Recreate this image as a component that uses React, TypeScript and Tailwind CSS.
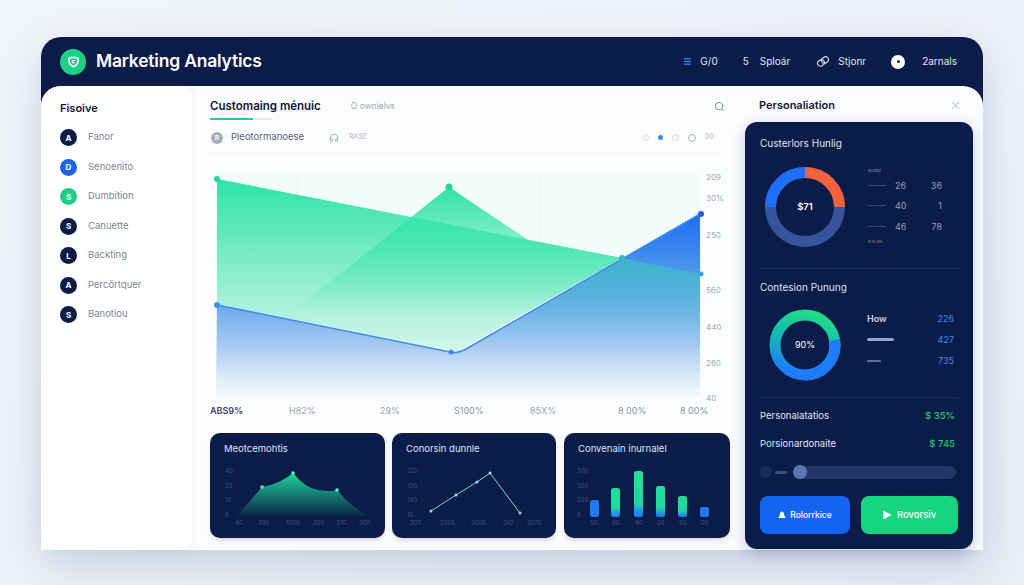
import React from 'react';
import { Search, X, Menu, Headphones } from 'lucide-react';

const FONT = "font-['Inter','Noto_Sans',sans-serif]";

const sideItems = [
  { letter: 'A', label: 'Fanor', color: 'bg-[#0c1c49]' },
  { letter: 'D', label: 'Senoenito', color: 'bg-[#1d62e8]' },
  { letter: 'S', label: 'Dumbition', color: 'bg-[#1fcf85]' },
  { letter: 'S', label: 'Canuette', color: 'bg-[#0c1c49]' },
  { letter: 'L', label: 'Backting', color: 'bg-[#0c1c49]' },
  { letter: 'A', label: 'Percörtquer', color: 'bg-[#0c1c49]' },
  { letter: 'S', label: 'Banotiou', color: 'bg-[#0c1c49]' },
];

const xLabels = [
  { text: 'ABS9%', width: 'w-[79px]', color: 'text-[#3b4560] font-semibold' },
  { text: 'H82%', width: 'w-[91px]', color: 'text-[#9aa3b2]' },
  { text: '29%', width: 'w-[74px]', color: 'text-[#9aa3b2]' },
  { text: 'S100%', width: 'w-[76px]', color: 'text-[#8b94a5]' },
  { text: '85X%', width: 'w-[88px]', color: 'text-[#9aa3b2]' },
  { text: '8 00%', width: 'w-[62px]', color: 'text-[#8b94a5]' },
  { text: '8 00%', width: 'w-[40px]', color: 'text-[#8b94a5]' },
];

const yLabels: [number, string][] = [
  [3, '209'], [24, '30%'], [61, '250'], [116, '560'], [153, '440'], [189, '260'], [224, '40'],
];

const MainChart = () => (
  <svg width="520" height="225" viewBox="0 0 520 225" className="overflow-visible">
    <defs>
      <linearGradient id="blueFill" gradientUnits="userSpaceOnUse" x1="0" y1="40" x2="0" y2="225">
        <stop offset="0" stopColor="#1f6ef5" />
        <stop offset="0.3" stopColor="#4a96ec" />
        <stop offset="0.5" stopColor="#6fa9ee" />
        <stop offset="0.7" stopColor="#a4c8f2" />
        <stop offset="0.86" stopColor="#d6e6f8" />
        <stop offset="1" stopColor="#fafcff" />
      </linearGradient>
      <linearGradient id="greenFill" gradientUnits="userSpaceOnUse" x1="0" y1="5" x2="0" y2="180">
        <stop offset="0" stopColor="#2fe3a8" />
        <stop offset="1" stopColor="#d8f6ee" />
      </linearGradient>
      <linearGradient id="peakFill" gradientUnits="userSpaceOnUse" x1="0" y1="13" x2="0" y2="140">
        <stop offset="0" stopColor="#2fe3a8" />
        <stop offset="1" stopColor="#2fe3a8" stopOpacity="0" />
      </linearGradient>
      <linearGradient id="tealFill" gradientUnits="userSpaceOnUse" x1="0" y1="84" x2="0" y2="170">
        <stop offset="0" stopColor="#3fd6b0" stopOpacity="0.5" />
        <stop offset="1" stopColor="#3fd6b0" stopOpacity="0" />
      </linearGradient>
    </defs>
    <rect x="0" y="0" width="484" height="225" fill="#f2fdf9" />
    {[81, 162, 243, 324, 405].map((x) => (
      <line key={x} x1={x} y1="0" x2={x} y2="225" stroke="#e6f2ee" strokeWidth="0.5" />
    ))}
    <path d="M1 131 L234 178 Q241 180 250 175 L484 40 L484 225 L0 225 Z" fill="url(#blueFill)" />
    <path d="M1 5 L406 84 L240 178 L1 131 Z" fill="url(#greenFill)" />
    <path d="M406 84 L484 100 L484 170 L259 170 Z" fill="url(#tealFill)" />
    <path d="M80 135 L233 13 L312 66 L406 84 L240 178 Z" fill="url(#peakFill)" />
    <path d="M1 131 L234 178 Q241 180 250 175 L484 40" fill="none" stroke="#3f8bea" strokeWidth="1.5" />
    <circle cx="1" cy="5" r="3" fill="#25d69a" />
    <circle cx="233" cy="13" r="3.5" fill="#25d69a" />
    <circle cx="406" cy="84" r="3" fill="#35b8c0" />
    <circle cx="485" cy="100" r="2.5" fill="#38a8e0" />
    <circle cx="1" cy="131" r="3" fill="#3a90e8" />
    <circle cx="235" cy="178" r="2.5" fill="#3a88ea" />
    <circle cx="485" cy="40" r="3" fill="#1d62e8" />
    {yLabels.map(([y, t]) => (
      <text key={t} x="490" y={y + 3} fontSize="8" fill="#a4acba">{t}</text>
    ))}
  </svg>
);

const DarkCard = ({ title, width, children }: { title: string; width: string; children: React.ReactNode }) => (
  <div className={`${width} h-[105px] bg-[#0c1c49] rounded-[10px] flex flex-col overflow-hidden shadow-md`}>
    <div className="h-[33px] px-[14px] flex items-center text-[9.5px] text-[#dfe6f4]">{title}</div>
    {children}
  </div>
);

const axisText = { fontSize: 6, fill: '#3f5288' };

const MiniArea = () => (
  <svg viewBox="0 0 175 72" className="w-[175px] h-[72px]">
    <defs>
      <linearGradient id="miniGreen" x1="0" y1="0" x2="0" y2="1">
        <stop offset="0" stopColor="#1fd694" />
        <stop offset="1" stopColor="#1fd694" stopOpacity="0.05" />
      </linearGradient>
    </defs>
    <path d="M27 50 L52 21 Q70 18 83 7 Q95 22 108 24 Q120 26 127 24 Q140 40 158 50 Z" fill="url(#miniGreen)" />
    <circle cx="52" cy="21" r="1.8" fill="#5cf0c0" />
    <circle cx="83" cy="7" r="1.8" fill="#5cf0c0" />
    <circle cx="127" cy="24" r="1.8" fill="#5cf0c0" />
    {[[5, '40'], [20, '20'], [34, '10'], [49, '0']].map(([y, t]) => (
      <text key={t} x="15" y={Number(y) + 2} {...axisText}>{t}</text>
    ))}
    {[[25, '40'], [48, '390'], [76, '1000'], [103, '300'], [126, '370'], [149, '360']].map(([x, t]) => (
      <text key={t} x={x} y="59" {...axisText}>{t}</text>
    ))}
  </svg>
);

const MiniLine = () => (
  <svg viewBox="0 0 164 72" className="w-[164px] h-[72px]">
    <polyline points="39,45 64,29 85,16 98,7 128,47" fill="none" stroke="#6fd6e0" strokeWidth="1" />
    {[[39, 45], [64, 29], [85, 16], [98, 7], [128, 47]].map(([x, y]) => (
      <circle key={x} cx={x} cy={y} r="1.5" fill="#8be6ec" />
    ))}
    {[[5, '120'], [20, '100'], [34, '140'], [49, '10']].map(([y, t]) => (
      <text key={t} x="15" y={Number(y) + 2} {...axisText}>{t}</text>
    ))}
    {[[18, '305'], [48, '2005'], [79, '3000'], [111, '310'], [135, '3070']].map(([x, t]) => (
      <text key={t} x={x} y="59" {...axisText}>{t}</text>
    ))}
  </svg>
);

const bars = [
  { x: 26, top: 34, fill: '#1f7cf0' },
  { x: 47, top: 22, fill: 'url(#barMix)' },
  { x: 70, top: 5, fill: 'url(#barMix)' },
  { x: 92, top: 20, fill: 'url(#barMix)' },
  { x: 114, top: 30, fill: 'url(#barMix)' },
  { x: 136, top: 41, fill: '#1f7cf0' },
];

const MiniBars = () => (
  <svg viewBox="0 0 166 72" className="w-[166px] h-[72px]">
    <defs>
      <linearGradient id="barMix" x1="0" y1="0" x2="0" y2="1">
        <stop offset="0" stopColor="#1ee09a" />
        <stop offset="0.7" stopColor="#1ed9a0" />
        <stop offset="0.9" stopColor="#1f8cf0" />
        <stop offset="1" stopColor="#1f7cf0" />
      </linearGradient>
    </defs>
    {bars.map((b) => (
      <rect key={b.x} x={b.x} y={b.top} width="9" height={51 - b.top} rx="2.5" fill={b.fill} />
    ))}
    {[[5, '500'], [20, '300'], [34, '200'], [49, '0']].map(([y, t]) => (
      <text key={t} x="13" y={Number(y) + 2} {...axisText}>{t}</text>
    ))}
    {[[26, '50'], [48, '00'], [71, '90'], [93, '00'], [115, '90'], [137, '00']].map(([x, t], i) => (
      <text key={i} x={x} y="59" {...axisText}>{t}</text>
    ))}
  </svg>
);

const RingOne = () => (
  <svg width="80" height="80" viewBox="0 0 80 80" className="shrink-0">
    <circle cx="40" cy="40" r="34.5" fill="none" stroke="#35549c" strokeWidth="11" />
    <path d="M40 5.5 A34.5 34.5 0 0 1 74.5 40" fill="none" stroke="#f4623a" strokeWidth="11" />
    <path d="M5.5 40 A34.5 34.5 0 0 1 40 5.5" fill="none" stroke="#1f6ffb" strokeWidth="11" />
  </svg>
);

const RingTwo = () => (
  <svg width="72" height="72" viewBox="0 0 72 72" className="shrink-0">
    <defs>
      <linearGradient id="ringMix" x1="0.7" y1="0" x2="0.4" y2="1">
        <stop offset="0" stopColor="#20dc88" />
        <stop offset="0.5" stopColor="#12b8b8" />
        <stop offset="1" stopColor="#1f7cf8" />
      </linearGradient>
    </defs>
    <circle cx="36" cy="36" r="30" fill="none" stroke="url(#ringMix)" strokeWidth="11" />
    <path d="M65.5 31 A30 30 0 0 1 36 66" fill="none" stroke="#1f7cf8" strokeWidth="11" />
  </svg>
);

export default function App() {
  return (
    <div className={`${FONT} w-[1024px] h-[585px] overflow-hidden bg-gradient-to-br from-[#f2f5fa] to-[#e8edf6] pt-[37px] pl-[41px]`}>
      <div className="w-[942px] h-[513px] rounded-[20px] bg-[#0c1c49] flex flex-col shadow-[0_14px_40px_rgba(60,85,140,0.22)]">
        {/* top bar */}
        <header className="h-[49px] shrink-0 flex items-center pl-[19px] pr-[26px] text-[10px] text-[#dfe7f5]">
          <div className="w-[26px] h-[26px] rounded-full bg-[#1fcf85] flex items-center justify-center">
            <svg width="13" height="13" viewBox="0 0 12 12" fill="none" stroke="#fff" strokeWidth="1.6">
              <path d="M1.8 3 Q6 1.2 10.2 3 V6 Q10 9 6 10.8 Q2 9 1.8 6 Z" />
              <path d="M7.5 5 H5 V7 H7" strokeWidth="1" />
            </svg>
          </div>
          <h1 className="ml-[10px] text-[17.5px] font-semibold text-white tracking-[-0.2px]">Marketing Analytics</h1>
          <div className="ml-auto flex items-center">
            <Menu size={9} className="text-[#3d8ff0]" strokeWidth={3} />
            <span className="ml-[8px]">G/0</span>
            <span className="ml-[25px] text-[10px]">5</span>
            <span className="ml-[11px]">Sploár</span>
            <svg width="14" height="13" viewBox="0 0 14 13" fill="none" stroke="#dfe7f5" strokeWidth="1.1" className="ml-[26px]">
              <ellipse cx="5" cy="8" rx="3.6" ry="3" transform="rotate(-30 5 8)" />
              <ellipse cx="9" cy="5" rx="3.6" ry="3" transform="rotate(-30 9 5)" />
            </svg>
            <span className="ml-[8px]">Stjonr</span>
            <div className="ml-[25px] w-[14px] h-[14px] rounded-full bg-white flex items-center justify-center">
              <div className="w-[3px] h-[3px] rounded-full bg-[#0c1c49]" />
            </div>
            <span className="ml-[17px]">2arnals</span>
          </div>
        </header>

        <div className="flex-1 min-h-0 flex bg-[#fbfcfe] rounded-t-[20px]">
          {/* sidebar */}
          <aside className="w-[151px] shrink-0 bg-white rounded-tl-[20px] rounded-r-[12px] rounded-bl-[20px] pl-[19px] pt-[15px] shadow-[2px_0_8px_rgba(120,140,180,0.07)]">
            <div className="h-[14px] flex items-center text-[11px] font-semibold text-[#0f1a35]">Fisoive</div>
            <ul className="mt-[14px] flex flex-col gap-[12.5px]">
              {sideItems.map((item) => (
                <li key={item.label} className="h-[17px] flex items-center">
                  <span className={`${item.color} w-[17px] h-[17px] rounded-full flex items-center justify-center text-[8px] font-bold text-white`}>{item.letter}</span>
                  <span className="ml-[11px] text-[9.5px] text-[#7c8696]">{item.label}</span>
                </li>
              ))}
            </ul>
          </aside>

          {/* main column */}
          <main className="w-[553px] shrink-0 pl-[18px] flex flex-col">
            <div className="h-[36px] pr-[20px] flex items-start pt-[13px]">
              <div>
                <div className="text-[11.5px] leading-[14px] font-semibold text-[#0f1a35]">Customaing ménuic</div>
                <div className="mt-[5px] w-[62px] h-[2px] bg-[#e4e8ee]">
                  <div className="w-[43px] h-[2px] bg-[#1fcf95]" />
                </div>
              </div>
              <span className="ml-[30px] text-[8.5px] leading-[14px] text-[#a0a8b5]">O ownielvs</span>
              <Search size={11} className="ml-auto mt-[2px] text-[#7d8592]" />
            </div>

            <div className="h-[32px] mr-[24px] flex items-center border-b border-[#f0f2f6]">
              <span className="ml-[1px] w-[12px] h-[12px] rounded-full bg-[#a9afba] flex items-center justify-center text-[6px] font-bold text-white">R</span>
              <span className="ml-[8px] text-[9.5px] text-[#596273]">Pleotormanoese</span>
              <Headphones size={10} className="ml-[25px] text-[#9aa1ad]" />
              <span className="ml-[10px] text-[7px] text-[#b3b9c4]">RASE</span>
              <div className="ml-auto mr-[2px] flex items-center gap-[9px]">
                <span className="w-[6px] h-[6px] rounded-full border border-[#dfe3ea]" />
                <span className="w-[5px] h-[5px] rounded-full bg-[#2d8be0]" />
                <span className="w-[7px] h-[7px] rounded-full border border-[#d5d9e0]" />
                <span className="w-[8px] h-[8px] rounded-full border border-[#aab1bc]" />
                <span className="w-[14px] text-[7px] text-[#b3b9c4]">00</span>
              </div>
            </div>

            <div className="mt-[20px] pl-[6px]">
              <MainChart />
            </div>

            <div className="mt-[6px] h-[12px] flex items-center text-[9px]">
              {xLabels.map((l, i) => (
                <span key={i} className={`${l.width} shrink-0 ${l.color}`}>{l.text}</span>
              ))}
            </div>

            <div className="mt-[16px] flex">
              <DarkCard title="Meotcemohtis" width="w-[175px]"><MiniArea /></DarkCard>
              <div className="w-[7px]" />
              <DarkCard title="Conorsin dunnle" width="w-[164px]"><MiniLine /></DarkCard>
              <div className="w-[8px]" />
              <DarkCard title="Convenain inurnalel" width="w-[166px]"><MiniBars /></DarkCard>
            </div>
          </main>

          {/* right panel */}
          <section className="w-[238px] shrink-0 flex flex-col">
            <div className="h-[36px] pl-[14px] pr-[21px] pt-[2px] flex items-center justify-between">
              <span className="text-[11px] font-semibold text-[#0f1a35]">Personaliation</span>
              <X size={13} className="text-[#c3c8d2]" />
            </div>
            <div className="w-[228px] h-[427px] bg-[#0c1c49] rounded-[12px] px-[15px] text-[#dfe6f4] shadow-[0_4px_14px_rgba(30,50,100,0.25)]">
              <div className="h-[42px] flex items-center text-[10px]">Custerlors Hunlig</div>

              <div className="relative flex h-[105px] border-b border-[#1a2d63] items-start pt-[3px]">
                <div className="ml-[5px] relative">
                  <RingOne />
                  <div className="absolute inset-0 flex items-center justify-center text-[9.5px] font-semibold text-white">$71</div>
                </div>
                <div className="ml-[23px] flex-1 pr-[16px] text-[9px] text-[#8f9fc4]">
                  <div className="h-[8px] text-[4px] leading-[8px] text-[#8f9fc4]">Ibcdiyt</div>
                  {[['26', '36'], ['40', '1'], ['46', '78']].map(([a, b]) => (
                    <div key={a} className="h-[20.5px] flex items-center">
                      <span className="w-[18px] h-[1px] bg-[#34497f]" />
                      <span className="ml-[9px]">{a}</span>
                      <span className="ml-auto">{b}</span>
                    </div>
                  ))}
                  <div className="h-[10px] text-[4px] leading-[10px] text-[#b0916f]">Ill III ust</div>
                </div>
              </div>

              <div className="h-[36px] flex items-center text-[10px]">Contesion Punung</div>

              <div className="relative h-[93px] flex items-start border-b border-[#1a2d63] pt-[4px]">
                <div className="ml-[9px] relative">
                  <RingTwo />
                  <div className="absolute inset-0 flex items-center justify-center text-[9px] text-white">90%</div>
                </div>
                <div className="ml-[26px] flex-1 pr-[4px] -mt-[1px] text-[9px]">
                  <div className="h-[21px] flex items-center justify-between">
                    <span className="font-semibold text-[#cdd6ea]">How</span>
                    <span className="text-[#3f8ef0]">226</span>
                  </div>
                  <div className="h-[21px] flex items-center justify-between">
                    <span className="w-[27px] h-[3px] rounded-full bg-[#8ea7d6]" />
                    <span className="text-[#3f8ef0]">427</span>
                  </div>
                  <div className="h-[21px] flex items-center justify-between">
                    <span className="w-[14px] h-[2px] rounded-full bg-[#5a70a6]" />
                    <span className="text-[#3f8ef0]">735</span>
                  </div>
                </div>
              </div>

              <div className="h-[36px] pr-[3px] flex items-center justify-between text-[9.5px]">
                <span>Personalatatios</span>
                <span className="text-[#22c66e] font-medium">$ 35%</span>
              </div>
              <div className="h-[20px] pr-[3px] flex items-center justify-between text-[9.5px]">
                <span>Porsionardonaite</span>
                <span className="text-[#22c66e] font-medium">$ 745</span>
              </div>

              <div className="mt-[11px] mr-[2px] h-[14px] flex items-center">
                <span className="w-[12px] h-[12px] rounded-full bg-[#1a2b5c]" />
                <span className="ml-[3px] w-[12px] h-[3px] rounded-full bg-[#3b4f85]" />
                <span className="ml-[6px] w-[14px] h-[14px] rounded-full bg-[#5d75ad] relative z-10" />
                <span className="flex-1 -ml-[7px] h-[13px] rounded-r-full bg-[#233669]" />
              </div>

              <div className="mt-[17px] flex gap-[11px]">
                <button className="w-[90px] h-[38px] rounded-[8px] bg-[#1565f5] flex items-center justify-center gap-[4px] text-[8.5px] font-medium text-white">
                  <svg width="8" height="9" viewBox="0 0 8 9" fill="#fff">
                    <path d="M4 0.5 Q6 0.8 6.2 4 L7.6 7 H0.4 L1.8 4 Q2 0.8 4 0.5 Z" />
                  </svg>
                  Rolorrkice
                </button>
                <button className="w-[97px] h-[38px] rounded-[8px] bg-[#17d47f] flex items-center justify-center gap-[5px] text-[9.5px] font-medium text-white">
                  <svg width="9" height="10" viewBox="0 0 9 10" fill="#fff">
                    <path d="M0.5 0.5 L8.5 5 L0.5 9.5 Z" />
                  </svg>
                  Rovorsiv
                </button>
              </div>
            </div>
          </section>
        </div>
      </div>
    </div>
  );
}
